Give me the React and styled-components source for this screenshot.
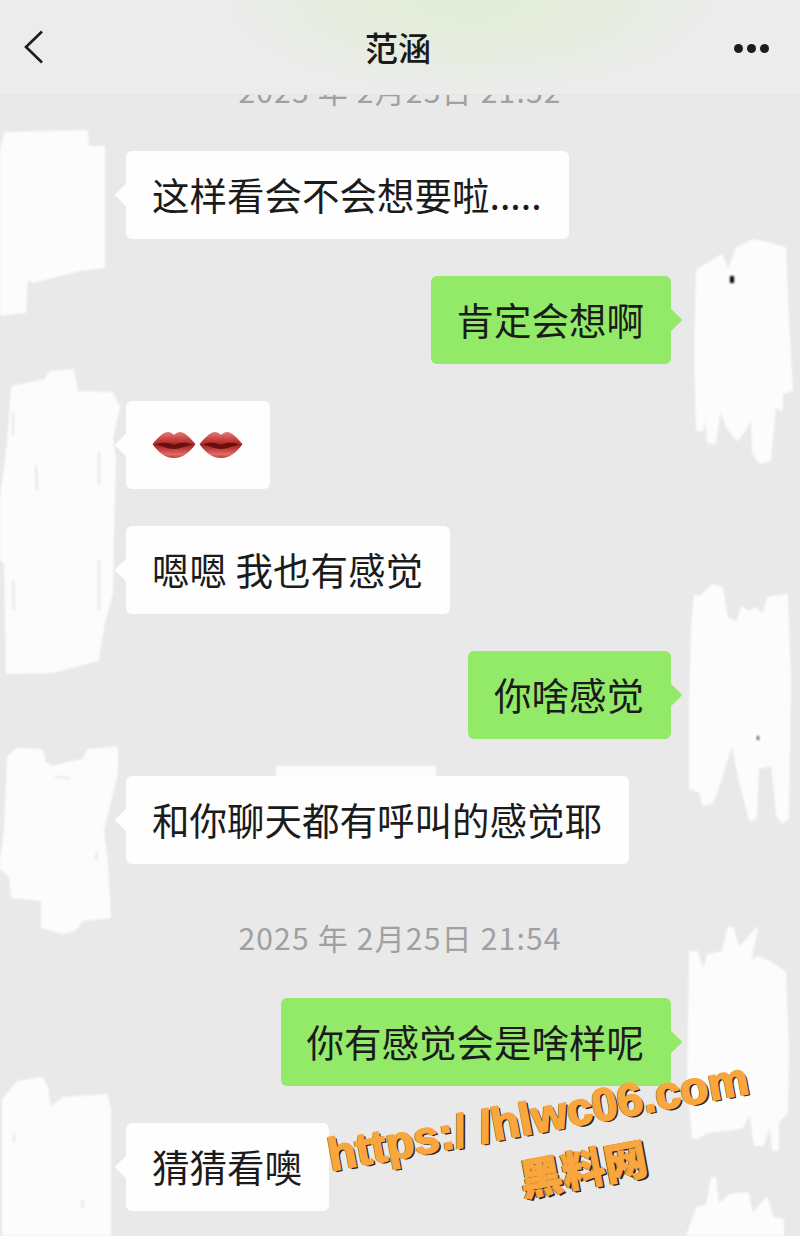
import styled, { createGlobalStyle } from 'styled-components'

const GlobalStyle = createGlobalStyle`
	html, body {
		margin: 0;
		padding: 0;
		background: #e9e9e9;
	}
`

const Page = styled.div`
	position: relative;
	display: flex;
	flex-direction: column;
	width: 800px;
	height: 1236px;
	overflow: hidden;
	background: #e9e9e9;
	font-family: "Noto Sans CJK SC", "Noto Sans", sans-serif;
`

const Header = styled.header`
	position: relative;
	z-index: 2;
	flex: none;
	display: flex;
	align-items: center;
	justify-content: space-between;
	box-sizing: border-box;
	height: 95px;
	padding: 0 31px 0 24px;
	background:
		radial-gradient(ellipse 250px 95px at 470px 0px, #e3edd8 0%, rgba(228, 237, 218, 0.8) 50%, rgba(236, 237, 234, 0) 100%),
		#ececec;
	border-bottom: 1px solid #e4e4e4;
`

const BackIcon = styled.svg`
	display: block;
	width: 20px;
	height: 34px;
	margin-top: -1px;
`

const Title = styled.h1`
	position: absolute;
	left: 0;
	right: 4px;
	margin: 0;
	text-align: center;
	font-size: 33px;
	font-weight: 500;
	line-height: 95px;
	color: #1a1a1a;
`

const MoreDots = styled.div`
	display: flex;
	gap: 4px;
	margin-top: 3px;
`

const Dot = styled.span`
	width: 9px;
	height: 9px;
	border-radius: 50%;
	background: #1c1c1c;
`

const MessageList = styled.main`
	position: relative;
	z-index: 1;
	flex: 1;
	min-height: 0;
	display: flex;
	flex-direction: column;
	gap: 37px;
	margin-top: -26px;
`

const Timestamp = styled.div`
	flex: none;
	height: 44px;
	margin: 15px 0 1px;
	text-align: center;
	font-size: 30px;
	letter-spacing: 1.2px;
	line-height: 42px;
	color: #a0a0a0;
	white-space: pre;
	&:first-child {
		margin-top: 0;
	}
`

const Row = styled.div`
	flex: none;
	display: flex;
	justify-content: ${({ $mine }) => ($mine ? 'flex-end' : 'flex-start')};
	padding: 0 129px 0 126px;
`

const Bubble = styled.div`
	position: relative;
	display: flex;
	align-items: center;
	gap: 3px;
	box-sizing: border-box;
	height: 88px;
	padding: 0 27px 3px 26px;
	border-radius: 6px;
	font-size: 37.5px;
	color: #1b1b1b;
	white-space: pre;
	background: ${({ $mine }) => ($mine ? '#92ea68' : '#fefefe')};
	&::before {
		content: '';
		position: absolute;
		top: 50%;
		${({ $mine }) => ($mine ? 'right: -8px;' : 'left: -8px;')}
		width: 16px;
		height: 16px;
		border-radius: 1px;
		background: inherit;
		transform: translateY(-50%) rotate(45deg);
	}
`

const LipsIcon = styled.svg`
	display: block;
	width: 44px;
	height: 28px;
	margin-top: 3px;
`

const Scribbles = styled.svg`
	position: absolute;
	top: 0;
	left: 0;
	z-index: 0;
	width: 800px;
	height: 1236px;
	filter: blur(1px);
`

const Watermark = styled.div`
	position: absolute;
	z-index: 3;
	left: 318px;
	top: 1089px;
	width: 450px;
	text-align: center;
	font-family: "Liberation Sans", sans-serif;
	font-weight: 700;
	color: #f9a63e;
	-webkit-text-stroke: 1.7px #f9a63e;
	text-shadow: -1px 0 0 #2d2415, 1px 1px 0 #2d2415, 2px 2px 0 #2d2415;
	transform: rotate(-10.5deg);
	white-space: pre;
`

const WatermarkUrl = styled.div`
	font-size: 46px;
	line-height: 54px;
`

const WatermarkName = styled.div`
	margin: 4px 0 0 70px;
	font-family: "Noto Sans CJK SC", sans-serif;
	font-weight: 900;
	font-size: 43px;
	line-height: 52px;
	-webkit-text-stroke: 1px #f9a63e;
`

const scribbleShapes = [
	'M5 133 L87 131 L88 147 L104 147 L104 267 L80 270 L33 282 L27 278 L25 312 L0 315 L0 153 Z',
	'M697 270 L722 255 L728 272 L737 248 L753 240 L768 243 L785 248 L788 320 L792 390 L782 393 L782 410 L775 407 L770 460 L760 463 L753 453 L752 417 L743 433 L737 440 L727 427 L720 407 L715 443 L708 442 L705 402 L703 430 L697 430 L695 353 Z',
	'M12 387 L45 380 L50 372 L73 370 L77 392 L112 393 L119 407 L112 438 L115 460 L113 533 L112 593 L103 627 L98 660 L53 672 L7 673 L5 563 L0 560 L0 507 L8 443 Z',
	'M692 625 L695 595 L700 598 L705 592 L713 585 L722 588 L727 618 L737 623 L742 607 L748 612 L755 608 L763 615 L768 598 L787 595 L790 682 L788 818 L782 823 L777 815 L772 765 L758 768 L756 818 L750 820 L740 782 L732 742 L720 782 L712 803 L703 805 L700 792 L690 788 L690 708 Z',
	'M8 757 L17 749 L42 750 L45 763 L53 767 L67 763 L83 760 L88 750 L117 747 L117 773 L103 830 L107 863 L110 917 L83 920 L75 930 L63 933 L42 927 L42 900 L12 897 L10 877 L0 867 L5 830 Z',
	'M690 952 L697 952 L703 972 L708 955 L723 952 L728 928 L733 928 L738 948 L745 942 L757 928 L750 962 L758 957 L770 962 L785 972 L788 1048 L787 1112 L778 1122 L778 1150 L773 1150 L770 1122 L763 1145 L755 1145 L750 1112 L742 1128 L707 1132 L698 1138 L693 1138 L688 1082 Z',
	'M3 1100 L17 1082 L42 1078 L47 1087 L50 1108 L63 1098 L107 1095 L110 1110 L110 1236 L3 1236 Z',
	'M687 1236 L697 1208 L707 1205 L712 1178 L715 1178 L718 1205 L730 1195 L748 1193 L752 1215 L767 1198 L773 1218 L783 1220 L783 1236 Z',
	'M277 767 L435 767 L435 790 L277 790 Z',
]

// thin leftovers of the avatars showing through the paint
const scribbleMarks = [
	'M13 412 L13 435',
	'M99 452 L99 485',
	'M13 580 L14 610',
	'M99 560 L99 610',
	'M36 465 L37 490',
	'M55 777 L70 778',
	'M97 852 L96 860',
	'M14 1133 L14 1142',
	'M82 1200 L83 1208',
]

const Lips = () => (
	<LipsIcon viewBox="0 0 44 28">
		<defs>
			<linearGradient id="lipUpper" x1="0" y1="0" x2="0" y2="1">
				<stop offset="0" stopColor="#e27c78" />
				<stop offset="0.5" stopColor="#cf4a47" />
				<stop offset="1" stopColor="#a82826" />
			</linearGradient>
			<linearGradient id="lipLower" x1="0" y1="0" x2="0" y2="1">
				<stop offset="0" stopColor="#8c1f1d" />
				<stop offset="0.5" stopColor="#cf4a47" />
				<stop offset="0.75" stopColor="#e06c67" />
				<stop offset="1" stopColor="#bb3a37" />
			</linearGradient>
		</defs>
		<path d="M0.5 13 C6 7 11 1 16 1 C18.5 1 20.5 2.8 22 3.8 C23.5 2.8 25.5 1 28 1 C33 1 38 7 43.5 13 C36 12.5 29 12 22 13.5 C15 12 8 12.5 0.5 13 Z" fill="url(#lipUpper)" />
		<path d="M0.5 13 C8 12.5 15 12 22 13.5 C29 12 36 12.5 43.5 13 C38 21 31 27 22 27 C13 27 6 21 0.5 13 Z" fill="url(#lipLower)" />
		<path d="M3 13 C10 11.5 16 11 22 13.5 C28 11 34 11.5 41 13 C34 15 28 18 22 18 C16 18 10 15 3 13 Z" fill="#6a0f0d" />
	</LipsIcon>
)

const messages = [
	{ time: '2025 年 2月25日 21:52' },
	{ text: '这样看会不会想要啦.....' },
	{ text: '肯定会想啊', mine: true },
	{ lips: true },
	{ text: '嗯嗯 我也有感觉' },
	{ text: '你啥感觉', mine: true },
	{ text: '和你聊天都有呼叫的感觉耶' },
	{ time: '2025 年 2月25日 21:54' },
	{ text: '你有感觉会是啥样呢', mine: true },
	{ text: '猜猜看噢' },
]

const App = () => {
	return (
		<Page>
			<GlobalStyle />
			<Scribbles viewBox="0 0 800 1236">
				{scribbleShapes.map((d) => <path key={d} d={d} fill="#fcfcfc" stroke="#fcfcfc" strokeWidth="2" strokeLinejoin="round" />)}
				{scribbleMarks.map((d) => <path key={d} d={d} stroke="#b5b5b5" strokeWidth="1.2" opacity="0.5" />)}
				<rect x="730" y="276" width="4" height="7" fill="#000" />
				<rect x="757" y="736" width="2" height="4" fill="#444" />
			</Scribbles>
			<Header>
				<BackIcon viewBox="0 0 20 34">
					<path d="M18 1.5 L2 17 L18 32.5" fill="none" stroke="#1c1c1c" strokeWidth="2.6" />
				</BackIcon>
				<Title>范涵</Title>
				<MoreDots>
					<Dot />
					<Dot />
					<Dot />
				</MoreDots>
			</Header>
			<MessageList>
				{messages.map((m, i) => (
					m.time
						? <Timestamp key={i}>{m.time}</Timestamp>
						: (
							<Row key={i} $mine={m.mine}>
								<Bubble $mine={m.mine}>
									{m.lips ? <><Lips /><Lips /></> : m.text}
								</Bubble>
							</Row>
						)
				))}
			</MessageList>
			<Watermark>
				<WatermarkUrl>https:/ /hlwc06.com</WatermarkUrl>
				<WatermarkName>黑料网</WatermarkName>
			</Watermark>
		</Page>
	)
}

export default App
